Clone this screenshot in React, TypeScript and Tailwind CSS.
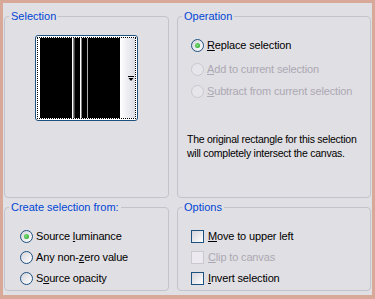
import React from "react";

const font = { fontFamily: '"Liberation Sans", Arial, sans-serif' };

function Radio({ checked, disabled }: { checked?: boolean; disabled?: boolean }) {
  return (
    <span
      className={`flex h-[13px] w-[13px] shrink-0 items-center justify-center rounded-full border ${
        disabled
          ? "border-[#cac8d0] bg-[#e6e5ea]"
          : "border-[#1c5180] bg-gradient-to-br from-[#d6d5dc] to-white"
      }`}
    >
      {checked && (
        <span className="h-[5px] w-[5px] rounded-full bg-[radial-gradient(circle_at_40%_40%,#7ee07e,#1f9e1f)]" />
      )}
    </span>
  );
}

function Check({ disabled }: { disabled?: boolean }) {
  return (
    <span
      className={`h-[13px] w-[13px] shrink-0 border ${
        disabled
          ? "border-[#cac8d0] bg-[#eceaf0]"
          : "border-[#1c5180] bg-gradient-to-br from-[#d6d5dc] to-white"
      }`}
    />
  );
}

function Label({
  pre,
  u,
  post,
  disabled,
}: {
  pre?: string;
  u: string;
  post: string;
  disabled?: boolean;
}) {
  return (
    <span
      className={`whitespace-nowrap text-[11px] leading-[14px] tracking-[-0.15px] ${
        disabled ? "text-[#aca8b4]" : "text-black"
      }`}
    >
      {pre}
      <span className="underline underline-offset-[1px]">{u}</span>
      {post}
    </span>
  );
}

function Group({
  title,
  className,
  children,
}: {
  title: string;
  className: string;
  children: React.ReactNode;
}) {
  return (
    <fieldset className={`rounded-[4px] border border-[#c4c3cc] ${className}`}>
      <legend className="ml-[4px] px-[2px] text-[11px] leading-[13px] text-[#0046d5]">{title}</legend>
      {children}
    </fieldset>
  );
}

function Preview() {
  return (
    <div className="mx-auto mt-[12px] h-[86px] w-[103px] rounded-[3px] border border-[#1c5180] bg-white p-[1px]">
      <div className="flex h-full border border-dotted border-black pl-[2px]">
        <svg width="80" height="80" viewBox="0 0 80 80" className="block h-full">
          <rect width="80" height="80" fill="#000" />
          <rect x="32" width="1.5" height="80" fill="#fff" />
          <rect x="33.5" width="1" height="80" fill="#888" />
          <rect x="40" width="1.5" height="80" fill="#fff" />
          <rect x="47" width="1" height="80" fill="#aaa" />
        </svg>
        <div className="flex flex-1 items-center justify-end bg-gradient-to-r from-white to-[#dcdce6] pr-[1px]">
          <svg width="6" height="5" viewBox="0 0 6 5">
            <rect x="0" y="0" width="6" height="1" fill="#000" />
            <polygon points="0.5,2 5.5,2 3,5" fill="#000" />
          </svg>
        </div>
      </div>
    </div>
  );
}

export default function App() {
  return (
    <div className="h-[299px] w-[375px] bg-[#d8a898] pb-[4px] pl-[3px] pr-[3px] pt-[3px]" style={font}>
      <div className="flex h-full flex-col gap-[3px] bg-[#e0dfe3] px-[1px] pt-[7px]">
        <div className="flex gap-[8px]">
          <Group title="Selection" className="h-[188px] w-[165px]">
            <Preview />
          </Group>
          <Group title="Operation" className="h-[188px] w-[194px]">
            <div className="pl-[13px]">
              <div className="mt-[15px] flex h-[14px] items-center gap-[3px]">
                <Radio checked />
                <Label u="R" post="eplace selection" />
              </div>
              <div className="mt-[10px] flex h-[14px] items-center gap-[3px]">
                <Radio disabled />
                <Label u="A" post="dd to current selection" disabled />
              </div>
              <div className="mt-[8px] flex h-[14px] items-center gap-[3px]">
                <Radio disabled />
                <Label u="S" post="ubtract from current selection" disabled />
              </div>
            </div>
            <p className="ml-[9px] mt-[34px] whitespace-nowrap text-[10.5px] leading-[14px] tracking-[-0.25px] text-black">
              The original rectangle for this selection
              <br />
              will completely intersect the canvas.
            </p>
          </Group>
        </div>
        <div className="flex gap-[8px]">
          <Group title="Create selection from:" className="h-[90px] w-[165px]">
            <div className="pl-[15px]">
              <div className="mt-[15px] flex h-[14px] items-center gap-[3px]">
                <Radio checked />
                <Label pre="Source " u="l" post="uminance" />
              </div>
              <div className="mt-[7px] flex h-[14px] items-center gap-[3px]">
                <Radio />
                <Label pre="Any non-" u="z" post="ero value" />
              </div>
              <div className="mt-[7px] flex h-[14px] items-center gap-[3px]">
                <Radio />
                <Label pre="S" u="o" post="urce opacity" />
              </div>
            </div>
          </Group>
          <Group title="Options" className="h-[90px] w-[194px]">
            <div className="pl-[13px]">
              <div className="mt-[15px] flex h-[14px] items-center gap-[4px]">
                <Check />
                <Label u="M" post="ove to upper left" />
              </div>
              <div className="mt-[7px] flex h-[14px] items-center gap-[4px]">
                <Check disabled />
                <Label u="C" post="lip to canvas" disabled />
              </div>
              <div className="mt-[7px] flex h-[14px] items-center gap-[4px]">
                <Check />
                <Label u="I" post="nvert selection" />
              </div>
            </div>
          </Group>
        </div>
      </div>
    </div>
  );
}
